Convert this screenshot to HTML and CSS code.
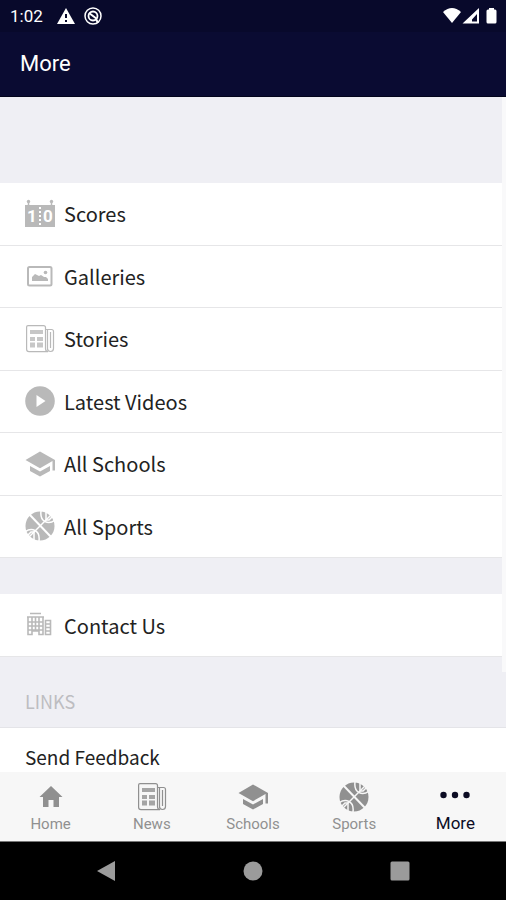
FILE: index.html
```html
<!DOCTYPE html>
<html lang="en">
<head>
    <meta charset="UTF-8">
    <meta name="viewport" content="width=device-width, initial-scale=1.0">
    <title>More</title>
    <link rel="stylesheet" href="styles.css">
</head>
<body>
    <!-- Icons used by both the menu and the tab bar -->
    <svg class="sprite" aria-hidden="true">
        <symbol id="icon-news" viewBox="0 0 30 30">
            <g fill="none" stroke="currentColor" stroke-width="1.2">
                <path d="M3 1.6h15.500q2 0 2 2v21q0 3 2.500 3H4q-2.400 0-2.400-2.400V3q0-1.400 1.400-1.400z"/>
                <path d="M20.500 5.500h6q2 0 2 2v17q0 3-3 3t-3-3V5.500M25.500 8v16"/>
            </g>
            <path fill="currentColor" opacity=".8" d="M5 6h13v4H5zM5 13h5v4H5zM12 13h6v4h-6zM5 18.500h5v5H5zM12 18.500h6v5h-6z"/>
        </symbol>
        <symbol id="icon-school" viewBox="0 0 30 30">
            <path fill="currentColor" d="M15 2.500L.5 11 15 19.200 27.500 12v9.500H30V11z"/>
            <path fill="currentColor" d="M5 17v5l10 5.500 10-5.500v-5l-10 5.500z"/>
        </symbol>
        <symbol id="icon-ball" viewBox="0 0 30 30">
            <circle cx="15" cy="15" r="14.500" fill="currentColor"/>
            <g class="seam">
                <path class="wide" d="M4 3l23 24"/>
                <path d="M4 26L26 4"/>
                <path d="M16 0q-1 8 4 10.500t10-1.500M14 30q1-8-4-10.500T0 21"/>
                <path d="M21 0v9M21 9h3l4-4M9 30v-9M9 21H6l-4 4"/>
            </g>
        </symbol>
    </svg>

    <header>
        <div class="status-bar">
            <span>1:02</span>
            <svg class="alert" viewBox="0 0 18 16" aria-hidden="true">
                <path fill="#fff" d="M9 0l9 16H0z"/>
                <path stroke="#08092b" stroke-width="2" d="M9 6v4M9 12v2"/>
            </svg>
            <svg class="dnd" viewBox="0 0 18 18" fill="none" stroke="#fff" aria-hidden="true">
                <circle cx="9" cy="9" r="8" stroke-width="1.500"/>
                <circle cx="9" cy="9" r="4.500" stroke-width="1.800"/>
                <path stroke-width="2" d="M5 6l8 6M12 12l2 4"/>
            </svg>
            <svg class="signals" viewBox="0 0 56 18" fill="#fff" aria-hidden="true">
                <path d="M1 5Q10-3 19 5l-9 11z"/>
                <path fill-rule="evenodd" d="M37 1v15.500H20.500zM35 7l-5 5.500v2h5z"/>
                <path d="M47 1h5v1.500h1q1.500 0 1.500 1.500v11q0 1.500-1.500 1.500h-7q-1.500 0-1.500-1.500V4q0-1.500 1.500-1.500h1z"/>
            </svg>
        </div>
        <h1>More</h1>
    </header>

    <main>
        <ul class="menu">
            <li><a href="#scores">
                <svg class="icon" viewBox="0 0 30 30" aria-hidden="true">
                    <path fill="currentColor" d="M0 6h30v22H0z"/>
                    <path stroke="currentColor" stroke-width="1.500" d="M3.500 3v4M26.500 3v4"/>
                    <circle cx="3.500" cy="2.500" r="1.700" fill="currentColor"/>
                    <circle cx="26.500" cy="2.500" r="1.700" fill="currentColor"/>
                    <path stroke="#fff" stroke-width="2" stroke-dasharray="2 2" d="M15 8v20"/>
                    <text class="score" x="7" y="23">1</text>
                    <text class="score" x="23" y="23">0</text>
                </svg>
                Scores
            </a></li>
            <li><a href="#galleries">
                <svg class="icon" viewBox="0 0 30 30" aria-hidden="true">
                    <rect x="3" y="6" width="23.500" height="18.500" rx="1.500" fill="none" stroke="currentColor" stroke-width="2"/>
                    <path fill="currentColor" d="M7 20v-4l3-3 4 2 2-1 3 2h2l2 2v2z"/>
                    <circle cx="20.500" cy="11.500" r="1.800" fill="currentColor"/>
                </svg>
                Galleries
            </a></li>
            <li><a href="#stories">
                <svg class="icon" aria-hidden="true"><use href="#icon-news"/></svg>
                Stories
            </a></li>
            <li><a href="#videos">
                <svg class="icon" viewBox="0 0 30 30" aria-hidden="true">
                    <circle cx="15" cy="15" r="14.800" fill="currentColor"/>
                    <path fill="#fff" d="M11.500 9l9 6-9 6z"/>
                </svg>
                Latest Videos
            </a></li>
            <li><a href="#schools">
                <svg class="icon" aria-hidden="true"><use href="#icon-school"/></svg>
                All Schools
            </a></li>
            <li><a href="#sports">
                <svg class="icon" aria-hidden="true"><use href="#icon-ball"/></svg>
                All Sports
            </a></li>
        </ul>

        <ul class="menu contact">
            <li><a href="#contact">
                <svg class="icon" viewBox="0 0 30 30" fill="none" stroke="currentColor" aria-hidden="true">
                    <path stroke-width="1.600" d="M5 3.500h11M2 7h17M3 7v17.500h4V21h7v3.500h4V7M3 12h15M3 16h15M3 20h15M7 7v17M10.500 7v14M14 7v17"/>
                    <path stroke-width="1.600" d="M20.500 10.500h5v14h-5zM20 14h6M20 17.500h6M20 21h6"/>
                </svg>
                Contact Us
            </a></li>
        </ul>

        <h2>LINKS</h2>
        <ul class="menu links">
            <li><a href="#feedback">Send Feedback</a></li>
        </ul>
        <div class="scroll-thumb"></div>
    </main>

    <nav class="tabs">
        <a href="#home">
            <svg class="icon" viewBox="0 0 30 30" aria-hidden="true">
                <path fill="currentColor" d="M15 4L3.500 15H7v10h5.500v-7h5v7H23V15h3.500z"/>
            </svg>
            Home
        </a>
        <a href="#news">
            <svg class="icon" aria-hidden="true"><use href="#icon-news"/></svg>
            News
        </a>
        <a href="#schools">
            <svg class="icon" aria-hidden="true"><use href="#icon-school"/></svg>
            Schools
        </a>
        <a href="#sports">
            <svg class="icon" aria-hidden="true"><use href="#icon-ball"/></svg>
            Sports
        </a>
        <a href="#more" class="active">
            <svg class="icon" viewBox="0 0 30 30" fill="currentColor" aria-hidden="true">
                <circle cx="3.500" cy="13" r="3.200"/>
                <circle cx="15" cy="13" r="3.200"/>
                <circle cx="26.500" cy="13" r="3.200"/>
            </svg>
            More
        </a>
    </nav>

    <div class="system-nav">
        <button aria-label="Back">
            <svg viewBox="0 0 20 20"><path d="M19 0v20L1 10z"/></svg>
        </button>
        <button aria-label="Home screen">
            <svg viewBox="0 0 20 20"><circle cx="10" cy="10" r="9.500"/></svg>
        </button>
        <button aria-label="Recent apps">
            <svg viewBox="0 0 20 20"><rect x="0.500" y="0.500" width="19" height="19" rx="1.500"/></svg>
        </button>
    </div>
</body>
</html>
```
FILE: styles.css
```css
* {
    box-sizing: border-box;
}

body {
    margin: 0;
    height: 100vh;
    display: flex;
    flex-direction: column;
    font-family: Roboto, sans-serif;
    background: #efeff4;
}

a {
    color: inherit;
    text-decoration: none;
}

.sprite {
    display: none;
}

header {
    background: #0a0b32;
    color: #fff;
    border-bottom: 1px solid #03041c;
}

.status-bar {
    display: flex;
    align-items: center;
    height: 32px;
    padding: 0 8px 0 10px;
    background: #08092b;
    font-size: 17px;
}

.alert {
    width: 18px;
    height: 16px;
    margin-left: 14px;
}

.dnd {
    width: 18px;
    height: 18px;
    margin-left: 9px;
}

.signals {
    width: 56px;
    height: 18px;
    margin-left: auto;
}

h1 {
    margin: 0;
    padding: 0 20px;
    font-size: 22px;
    font-weight: 400;
    line-height: 64px;
}

main {
    position: relative;
    flex: 1;
    min-height: 0;
    overflow: hidden;
    padding-top: 86px;
}

.menu {
    display: grid;
    grid-auto-rows: 1fr;
    min-height: 375px;
    margin: 0;
    padding: 0;
    list-style: none;
    background: #fff;
    font-family: "Noto Sans CJK SC", sans-serif;
    font-size: 20px;
    color: #222;
}

.menu li {
    border-bottom: 1px solid #e6e6e8;
}

.menu a {
    --surface: #fff;
    display: flex;
    align-items: center;
    gap: 9px;
    height: 100%;
    padding: 0 25px;
}

.icon {
    width: 30px;
    height: 30px;
}

.menu .icon {
    color: #b9b9b9;
}

.seam {
    fill: none;
    stroke: var(--surface);
    stroke-width: 1.5px;
}

.seam .wide {
    stroke-width: 2px;
}

.score {
    fill: #fff;
    font-family: Roboto, sans-serif;
    font-size: 17px;
    font-weight: 700;
    text-anchor: middle;
}

.contact {
    min-height: 63px;
    margin-top: 36px;
}

h2 {
    margin: 0;
    padding: 20px 25px 0;
    height: 71px;
    border-bottom: 1px solid #e4e4e8;
    font-family: "Noto Sans CJK SC", sans-serif;
    font-size: 18px;
    font-weight: 400;
    line-height: 48px;
    color: #bdbdc1;
}

.links {
    min-height: 57px;
    font-size: 19px;
}

.scroll-thumb {
    position: absolute;
    top: 0;
    right: 0;
    width: 4px;
    height: 575px;
    background: #f9f9fa;
}

.tabs {
    --surface: #f7f7f7;
    display: flex;
    height: 70px;
    padding-top: 10px;
    background: #f7f7f7;
    border-bottom: 1px solid #777;
    color: #909090;
    font-size: 15px;
}

.tabs a {
    flex: 1;
    display: flex;
    flex-direction: column;
    align-items: center;
    gap: 3px;
}

.tabs .active {
    color: #0c0c24;
    font-size: 17px;
    gap: 1px;
}

.system-nav {
    display: flex;
    justify-content: space-around;
    align-items: center;
    height: 58px;
    padding: 0 33px;
    background: #000;
}

.system-nav button {
    display: flex;
    padding: 0;
    border: none;
    background: none;
}

.system-nav svg {
    width: 20px;
    height: 20px;
    fill: #9b9b9b;
}
```
